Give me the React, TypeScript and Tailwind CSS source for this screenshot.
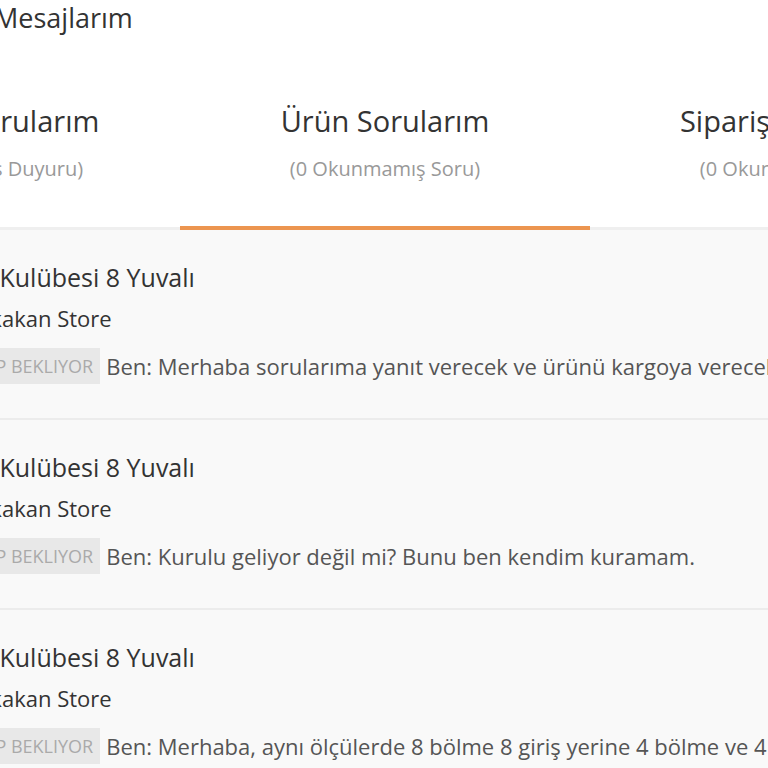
import React from 'react'

const tabs = [
  { title: 'Satıcı Duyurularım', sub: '(0 Okunmamış Duyuru)', active: false },
  { title: 'Ürün Sorularım', sub: '(0 Okunmamış Soru)', active: true },
  { title: 'Sipariş Sorularım', sub: '(0 Okunmamış Soru)', active: false },
]

const questions = [
  'Ben: Merhaba sorularıma yanıt verecek ve ürünü kargoya verecek misiniz?',
  'Ben: Kurulu geliyor değil mi? Bunu ben kendim kuramam.',
  'Ben: Merhaba, aynı ölçülerde 8 bölme 8 giriş yerine 4 bölme ve 4 giriş olan modeliniz var mı?',
]

export default function App() {
  return (
    <div
      className="w-[768px] h-[768px] overflow-hidden bg-white"
      style={{ fontFamily: '"Open Sans", "Noto Sans", sans-serif' }}
    >
      <div className="ml-[-230px] w-[1230px]">
        {/* Header */}
        <div className="h-[60px] pl-[224px] pt-[1px]">
          <h1 className="text-[27px] leading-[34px] text-[#333]">Mesajlarım</h1>
        </div>

        {/* Tabs */}
        <div className="flex border-b-[3px] border-[#efefef]">
          {tabs.map((t) => (
            <div
              key={t.title}
              className="relative w-[410px] h-[167px] flex flex-col items-center pt-[42px]"
            >
              <span className="text-[29px] leading-[38px] text-[#333]">{t.title}</span>
              <span className="mt-[16px] text-[20px] leading-[26px] text-[#999]">{t.sub}</span>
              {t.active && (
                <div className="absolute left-0 right-0 bottom-[-3px] h-[4px] bg-[#ec9550]" />
              )}
            </div>
          ))}
        </div>

        {/* List */}
        <div className="bg-[#f9f9f9] h-[600px]">
          {questions.map((q, i) => (
            <div
              key={i}
              className="h-[190px] border-b-2 border-[#ececec] pl-[180px] pt-[32px] flex flex-col"
            >
              <span className="ml-[-8px] text-[25px] leading-[30px] text-[#333] whitespace-nowrap">
                Kedi Kulübesi 8 Yuvalı
              </span>
              <span className="mt-[12px] pl-[15px] text-[22px] leading-[28px] text-[#333] whitespace-nowrap">
                Tokakan Store
              </span>
              <div className="mt-[16px] ml-[-10px] flex items-center gap-[6px] whitespace-nowrap">
                <span className="h-[36px] pl-[12px] pr-[7px] flex items-center bg-[#e8e8e8] text-[18px] text-[#aaa] uppercase">
                  Cevap Bekliyor
                </span>
                <span className="text-[22px] text-[#555]">{q}</span>
              </div>
            </div>
          ))}
        </div>
      </div>
    </div>
  )
}
